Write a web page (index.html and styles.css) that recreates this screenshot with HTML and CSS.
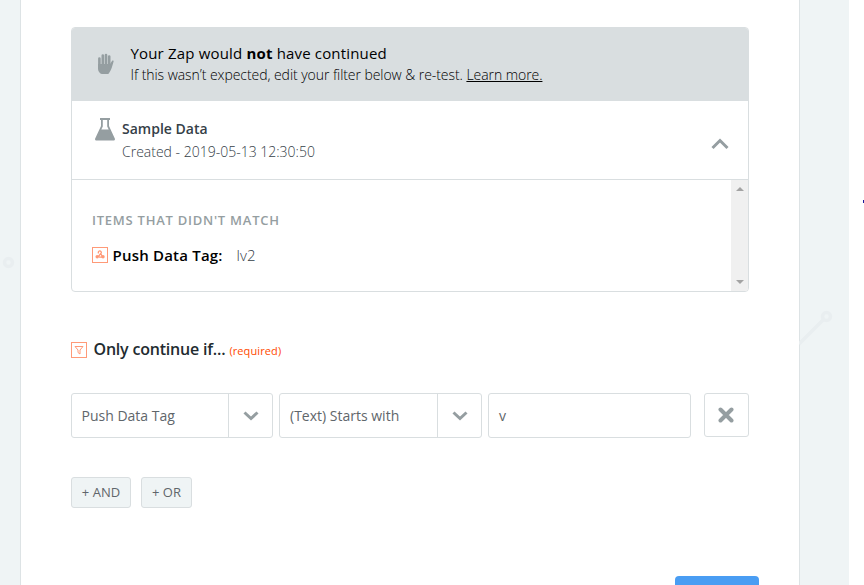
FILE: index.html
```
<!DOCTYPE html>
<html lang="en">
<head>
<meta charset="utf-8">
<title>Filter setup</title>
<link rel="stylesheet" href="styles.css">
</head>
<body>
<div class="canvas">
  <svg class="deco deco-left" width="16" height="16" viewBox="0 0 16 16"><circle cx="8.500" cy="7.500" r="4"/></svg>
  <svg class="deco deco-right" width="40" height="44" viewBox="0 0 40 44"><path d="M0 36 25 11"/><circle cx="27.500" cy="8.500" r="4"/></svg>
  <main class="panel">
    <section class="result">
      <header class="result-head">
        <svg class="hand" width="18" height="22" viewBox="0 0 18 22"><path d="M2.400 5.500v8M5.800 2.500v10M9 2v11M12.200 3.500v10" /><path class="palm" d="M1 11h12l2-3c.5-.8 1.900-.5 1.600.6l-1.600 5.400c-.7 2.500-2 4.500-3.200 6.400-.4.600-1 .6-1.500.6H5c-.8 0-1.300-.2-1.900-.8C1.600 18.700 1 17.400 1 15.500z"/></svg>
        <div class="result-copy">
          <p class="result-title">Your Zap would <b>not</b> have continued</p>
          <p class="result-note">If this wasn’t expected, edit your filter below &amp; re-test. <a href="#">Learn more.</a></p>
        </div>
      </header>
      <div class="sample">
        <svg class="flask" width="20" height="23" viewBox="0 0 20 23"><path d="M5 0h10v2h-1v6l5.700 12.200c.7 1.500 0 2.300-1.400 2.300H1.700C.3 22.500-.4 21.700.3 20.200L6 8V2H5zM7.800 2v6.500L6.300 11.500h7.400L12.200 8.500V2z" fill-rule="evenodd"/></svg>
        <div class="sample-copy">
          <p class="sample-title">Sample Data</p>
          <p class="sample-date">Created - 2019-05-13 12:30:50</p>
        </div>
        <svg class="chevron-up" width="18" height="12" viewBox="0 0 18 12"><path d="M1.500 10 9 2.500 16.500 10"/></svg>
      </div>
      <div class="items">
        <div class="items-body">
          <h2>ITEMS THAT DIDN'T MATCH</h2>
          <div class="item">
            <svg class="app-icon" width="16" height="16" viewBox="0 0 16 16"><rect x=".5" y=".5" width="15" height="15"/><path class="hook" d="M6.600 6.300a1.500 1.500 0 1 1 2.600-.3L6 10M8.400 6l2.300 4M7 10.200H10.500"/><circle class="dot" cx="5.200" cy="9.800" r="1.700"/><circle class="dot" cx="11" cy="9.800" r="1.700"/></svg>
            <span class="item-name">Push Data Tag:</span>
            <span class="item-value">lv2</span>
          </div>
        </div>
        <div class="scrollbar">
          <svg width="8" height="4" viewBox="0 0 8 4"><path d="M0 4 4 0 8 4z"/></svg>
          <svg width="8" height="4" viewBox="0 0 8 4"><path d="M0 0h8L4 4z"/></svg>
        </div>
      </div>
    </section>

    <h1 class="field-title">
      <svg class="app-icon" width="16" height="16" viewBox="0 0 16 16"><rect x=".5" y=".5" width="15" height="15"/><path d="M4 4.500h8L9 8v4L7 10.500V8z"/></svg>
      <span class="field-name">Only continue if...</span>
      <span class="required">(required)</span>
    </h1>

    <div class="rule">
      <div class="select select-field"><span>Push Data Tag</span><i><svg width="16" height="10" viewBox="0 0 16 10"><path d="m1.500 1.500 6.500 6 6.500-6"/></svg></i></div>
      <div class="select select-test"><span>(Text) Starts with</span><i><svg width="16" height="10" viewBox="0 0 16 10"><path d="m1.500 1.500 6.500 6 6.500-6"/></svg></i></div>
      <div class="input">v</div>
      <button class="remove" aria-label="Remove"><svg width="16" height="16" viewBox="0 0 16 16"><path d="m2.500 2.500 11 11m0-11-11 11"/></svg></button>
    </div>

    <div class="actions">
      <button class="add add-and">+ AND</button>
      <button class="add add-or">+ OR</button>
    </div>
    <div class="primary"></div>
  </main>
  <svg class="mark" width="2" height="3" viewBox="0 0 2 3"><path d="M1 0h1v3H1z"/></svg>
</div>
</body>
</html>
```

FILE: styles.css
```
* { box-sizing: border-box; }
body {
  margin: 0;
  overflow: hidden;
  background: #fff;
  font-family: "Open Sans", sans-serif;
  color: #000;
}
p, h1, h2 { margin: 0; white-space: nowrap; }
.canvas {
  position: relative;
  width: 864px;
  height: 585px;
  overflow: hidden;
  padding-left: 20px;
  background: linear-gradient(90deg, #eff4f5 849px, #fff 849px);
}
.deco { position: absolute; fill: none; stroke: #e9eef0; stroke-width: 3.5; }
.deco-left { left: 0; top: 255px; }
.deco-right { left: 799px; top: 308px; }
.mark { position: absolute; left: 862px; top: 200px; fill: #1a1a9c; }
.panel {
  width: 780px;
  height: 585px;
  padding: 27px 50px 0;
  background: #fff;
  border: solid #dde3e5;
  border-width: 0 1px;
}
.result {
  width: 678px;
  height: 265px;
  border: 1px solid #d9dee0;
  border-radius: 4px;
  overflow: hidden;
}
.result-head {
  display: flex;
  height: 73px;
  padding: 14px 0 0 25px;
  background: #d9dee0;
}
.hand { margin-top: 11px; fill: none; stroke: #959ea1; stroke-width: 2.600; stroke-linecap: round; }
.palm { fill: #959ea1; stroke: none; }
.result-copy { margin-left: 15.5px; }
.result-title { font-size: 15px; line-height: 22px; letter-spacing: .17px; }
.result-title b { font-weight: 700; }
.result-note { margin-top: 1px; font-size: 14px; line-height: 20px; font-weight: 300; letter-spacing: -.06px; }
.result-note a { color: #000; }
.sample {
  display: flex;
  height: 79px;
  padding: 17px 19px 0 23px;
  border-bottom: 1px solid #d9dee0;
}
.flask { fill: #959ea1; }
.sample-copy { margin-left: 7px; flex: 1; }
.sample-title { font-size: 14px; line-height: 22px; font-weight: 600; color: #354047; }
.sample-date { font-size: 14px; line-height: 24px; font-weight: 300; color: #354047; }
.chevron-up { margin-top: 20px; fill: none; stroke: #959ea1; stroke-width: 3; }
.items { display: flex; height: 111px; }
.items-body { flex: 1; padding: 31px 0 0 20px; }
.items h2 { font-size: 13px; line-height: 18px; font-weight: 600; letter-spacing: .75px; color: #959ea1; }
.item { display: flex; align-items: center; height: 22px; margin-top: 15px; }
.app-icon { flex: none; fill: none; stroke: #ff9a78; stroke-width: 1; }
.app-icon .hook { stroke-width: 1.3; }
.app-icon .dot { fill: #ff9a78; stroke: none; }
.item-name { width: 124px; margin-left: 4.5px; font-size: 15px; font-weight: 600; letter-spacing: .2px; }
.item-value { font-size: 15px; font-weight: 300; letter-spacing: .1px; color: #354047; }
.scrollbar {
  display: flex;
  flex-direction: column;
  justify-content: space-between;
  align-items: center;
  width: 17px;
  padding: 7px 0 7px;
  background: #f0f0f0;
  fill: #a3a3a3;
}
.field-title { display: flex; align-items: center; height: 24px; margin-top: 46px; }
.field-name { margin: -2px 0 0 6.5px; font-size: 16px; font-weight: 600; letter-spacing: -.2px; color: #222b30; }
.required { margin: 1px 0 0 4px; font-size: 11px; font-weight: 500; letter-spacing: .1px; color: #ff4a00; }
.rule { display: flex; margin-top: 31px; font-size: 14px; color: #5f666b; }
.select, .input, .remove { border: 1px solid #d9dee0; border-radius: 3px; background: #fff; }
.select { display: flex; height: 45px; line-height: 43px; white-space: nowrap; }
.select span { flex: 1; padding-left: 10px; }
.select i { display: flex; align-items: center; justify-content: center; width: 44px; border-left: 1px solid #d9dee0; }
.select svg { fill: none; stroke: #959ea1; stroke-width: 3; }
.select-field { width: 202px; margin-right: 6px; }
.select-field span { padding-left: 9.5px; }
.select-test { width: 203px; margin-right: 6px; }
.input { width: 203px; height: 45px; padding-left: 10px; line-height: 43px; }
.remove { display: flex; align-items: center; justify-content: center; width: 45px; height: 44px; margin-left: 13px; padding: 0 1px 0 0; }
.remove svg { stroke: #959ea1; stroke-width: 4; stroke-linecap: round; }
.actions { display: flex; gap: 10px; margin-top: 39px; }
.add {
  height: 31px;
  padding: 0 0 2px;
  border: 1px solid #d9dee0;
  border-radius: 3px;
  background: #eff4f5;
  font: 13px "Open Sans", sans-serif;
  color: #5f666b;
}
.add-and { width: 60px; }
.add-or { width: 51px; }
.primary { width: 84px; height: 40px; margin: 68px 0 0 604px; border-radius: 4px; background: #499df3; }
```
